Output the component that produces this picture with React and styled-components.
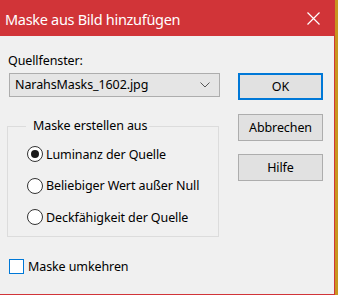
import styled, { createGlobalStyle } from 'styled-components';

const GlobalStyle = createGlobalStyle`
    html, body {
        margin: 0;
        padding: 0;
        background: #c8951f;
    }
    * {
        box-sizing: border-box;
    }
`;

const options = [
    { label: 'Luminanz der Quelle', checked: true },
    { label: 'Beliebiger Wert außer Null', checked: false },
    { label: 'Deckfähigkeit der Quelle', checked: false },
];

export default function App() {
    return (
        <>
            <GlobalStyle />
            <Window>
                <TitleBar>
                    <Title>Maske aus Bild hinzufügen</Title>
                    <svg width="13" height="13" viewBox="0 0 13 13">
                        <path d="M0.5 0.5 L12.5 12.5 M12.5 0.5 L0.5 12.5" stroke="#fff" strokeWidth="1.2" />
                    </svg>
                </TitleBar>
                <Body>
                    <LeftColumn>
                        <Label>Quellfenster:</Label>
                        <Select>
                            <span>NarahsMasks_1602.jpg</span>
                            <svg width="10" height="6" viewBox="0 0 10 6">
                                <path d="M0.5 0.5 L5 5 L9.5 0.5" stroke="#555" strokeWidth="1" fill="none" />
                            </svg>
                        </Select>
                        <Group>
                            <Legend>Maske erstellen aus</Legend>
                            {options.map((o, index) => (
                                <RadioRow key={index}>
                                    <Radio checked={o.checked} />
                                    <span>{o.label}</span>
                                </RadioRow>
                            ))}
                        </Group>
                        <CheckRow>
                            <CheckBox />
                            <span>Maske umkehren</span>
                        </CheckRow>
                    </LeftColumn>
                    <RightColumn>
                        <Button primary>OK</Button>
                        <Button>Abbrechen</Button>
                        <Button>Hilfe</Button>
                    </RightColumn>
                </Body>
            </Window>
        </>
    );
}

const Window = styled.div`
    width: 335px;
    height: 295px;
    background: #f0f0f0;
    border-right: 1px solid #d13438;
    border-bottom: 1px solid #d13438;
    font-family: "Noto Sans", "Open Sans", sans-serif;
    font-size: 12.5px;
    letter-spacing: -0.1px;
    color: #000;
    display: flex;
    flex-direction: column;
`;

const TitleBar = styled.div`
    height: 36px;
    background: #d13438;
    color: #fff;
    display: flex;
    align-items: center;
    justify-content: space-between;
    padding: 0 14px 0 5px;
    flex-shrink: 0;
`;

const Title = styled.div`
    font-size: 14.5px;
    letter-spacing: -0.3px;
    font-family: "Noto Sans", "Open Sans", sans-serif;
    margin-top: 1px;
`;

const Body = styled.div`
    display: flex;
    padding: 0 0 0 7px;
`;

const LeftColumn = styled.div`
    width: 213px;
    display: flex;
    flex-direction: column;
`;

const Label = styled.div`
    margin: 16px 0 0 1px;
    line-height: 18px;
`;

const Select = styled.div`
    margin: 3px 0 0 2px;
    width: 211px;
    height: 24px;
    background: #e5e5e5;
    border: 1px solid #adadad;
    display: flex;
    align-items: center;
    justify-content: space-between;
    padding: 0 9px 0 5px;
    span {
        line-height: 18px;
    }
`;

const Group = styled.fieldset`
    margin: 20px 0 0 0;
    padding: 10px 0 0 19px;
    width: 212px;
    height: 120px;
    border: 1px solid #dcdcdc;
    display: flex;
    flex-direction: column;
    gap: 13.5px;
`;

const Legend = styled.legend`
    padding: 0 2px 0 7px;
    margin-left: -1px;
    line-height: 18px;
`;

const RadioRow = styled.div`
    display: flex;
    align-items: center;
    gap: 3px;
    height: 18px;
`;

const Radio = styled.div`
    width: 16px;
    height: 16px;
    border-radius: 50%;
    border: 1px solid #333;
    background: #fff;
    position: relative;
    &::after {
        content: "";
        display: ${props => props.checked ? 'block' : 'none'};
        position: absolute;
        left: 3px;
        top: 3px;
        width: 8px;
        height: 8px;
        border-radius: 50%;
        background: #1a1a1a;
    }
`;

const CheckRow = styled.div`
    display: flex;
    align-items: center;
    gap: 4px;
    margin: 20px 0 0 2px;
    height: 18px;
`;

const CheckBox = styled.div`
    width: 15px;
    height: 15px;
    border: 1px solid #0078d7;
    background: #fff;
`;

const RightColumn = styled.div`
    margin-left: 18px;
    padding-top: 37px;
    display: flex;
    flex-direction: column;
    gap: 13px;
`;

const Button = styled.div`
    width: 85px;
    height: 27px;
    display: flex;
    align-items: center;
    justify-content: center;
    background: #e1e1e1;
    border: ${props => props.primary ? '2px solid #0078d7' : '1px solid #adadad'};
    line-height: 18px;
    &:nth-child(2) {
        margin-top: 1px;
    }
`;
